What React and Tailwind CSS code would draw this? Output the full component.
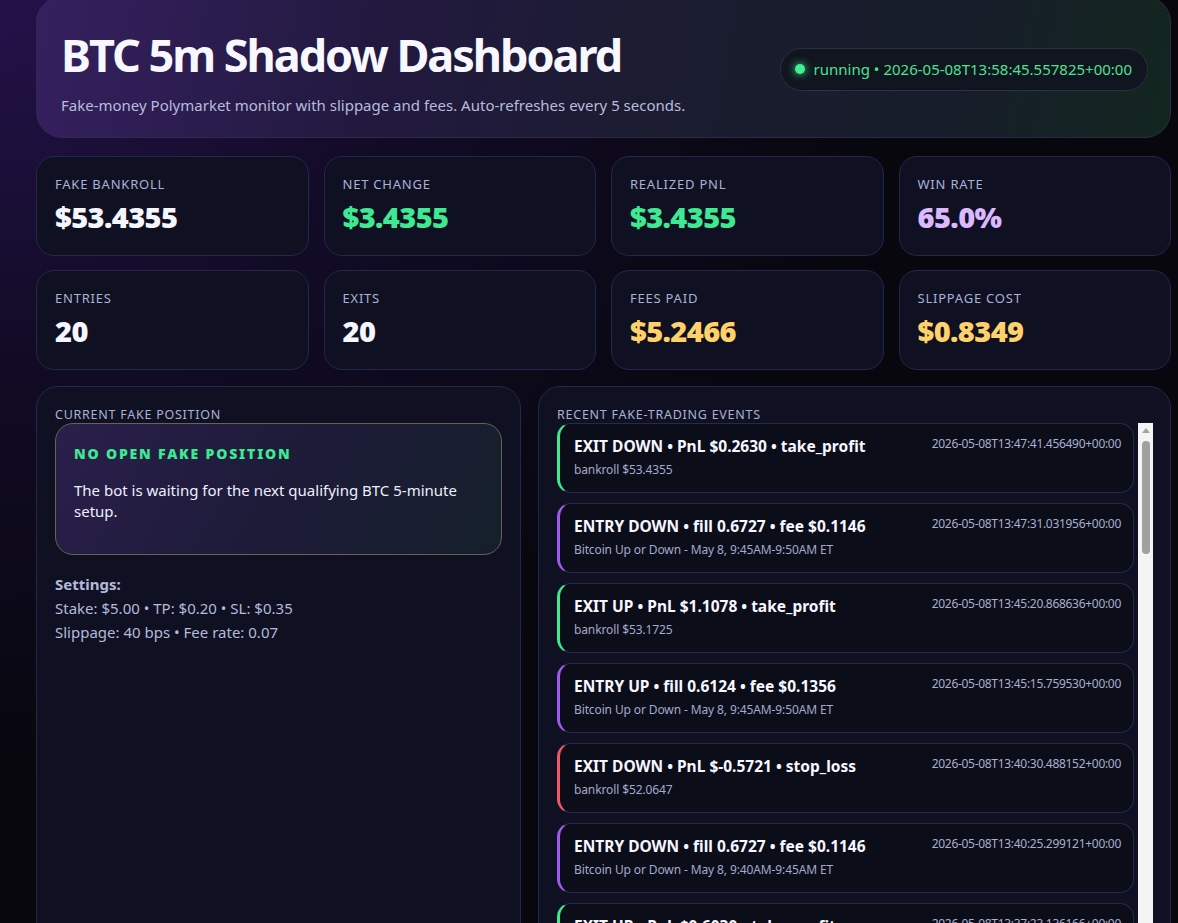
import React from "react";

const stats = [
  { label: "Fake bankroll", value: "$53.4355", color: "text-[#f5f6ff]" },
  { label: "Net change", value: "$3.4355", color: "text-[#3ee991]" },
  { label: "Realized PnL", value: "$3.4355", color: "text-[#3ee991]" },
  { label: "Win rate", value: "65.0%", color: "text-[#dcb8ff]" },
  { label: "Entries", value: "20", color: "text-[#f5f6ff]" },
  { label: "Exits", value: "20", color: "text-[#f5f6ff]" },
  { label: "Fees paid", value: "$5.2466", color: "text-[#ffd16b]" },
  { label: "Slippage cost", value: "$0.8349", color: "text-[#ffd16b]" },
];

const events = [
  {
    kind: "win",
    title: "EXIT DOWN • PnL $0.2630 • take_profit",
    sub: "bankroll $53.4355",
    ts: "2026-05-08T13:47:41.456490+00:00",
  },
  {
    kind: "entry",
    title: "ENTRY DOWN • fill 0.6727 • fee $0.1146",
    sub: "Bitcoin Up or Down - May 8, 9:45AM-9:50AM ET",
    ts: "2026-05-08T13:47:31.031956+00:00",
  },
  {
    kind: "win",
    title: "EXIT UP • PnL $1.1078 • take_profit",
    sub: "bankroll $53.1725",
    ts: "2026-05-08T13:45:20.868636+00:00",
  },
  {
    kind: "entry",
    title: "ENTRY UP • fill 0.6124 • fee $0.1356",
    sub: "Bitcoin Up or Down - May 8, 9:45AM-9:50AM ET",
    ts: "2026-05-08T13:45:15.759530+00:00",
  },
  {
    kind: "loss",
    title: "EXIT DOWN • PnL $-0.5721 • stop_loss",
    sub: "bankroll $52.0647",
    ts: "2026-05-08T13:40:30.488152+00:00",
  },
  {
    kind: "entry",
    title: "ENTRY DOWN • fill 0.6727 • fee $0.1146",
    sub: "Bitcoin Up or Down - May 8, 9:40AM-9:45AM ET",
    ts: "2026-05-08T13:40:25.299121+00:00",
  },
  {
    kind: "win",
    title: "EXIT UP • PnL $0.6030 • take_profit",
    sub: "bankroll $52.6368",
    ts: "2026-05-08T13:37:23.136166+00:00",
  },
  {
    kind: "entry",
    title: "ENTRY UP • fill 0.5931 • fee $0.1420",
    sub: "Bitcoin Up or Down - May 8, 9:35AM-9:40AM ET",
    ts: "2026-05-08T13:35:12.402871+00:00",
  },
];

const accent = {
  win: "border-l-[#3ee991]",
  loss: "border-l-[#f0576b]",
  entry: "border-l-[#9d5cf0]",
};

const StatCard = ({ label, value, color }) => (
  <div className="h-[100px] rounded-[18px] border border-[#24274a] bg-[#0f1122] px-[18px] pt-[18px]">
    <div className="text-[13px] uppercase tracking-[0.06em] text-[#a9b1d6] leading-[18px]">
      {label}
    </div>
    <div
      className={`mt-[6px] text-[29px] font-black leading-[36px] tracking-[-0.02em] ${color}`}
    >
      {value}
    </div>
  </div>
);

const EventCard = ({ e }) => (
  <div
    className={`h-[70px] shrink-0 rounded-[14px] border border-[#262a4a] border-l-[3px] bg-[#0b0d19] pl-[14px] pr-[12px] pt-[11px] ${accent[e.kind]}`}
  >
    <div className="flex items-start justify-between gap-3">
      <div className="text-[15.5px] font-bold leading-[22px] text-[#f6f7ff]">
        {e.title}
      </div>
      <div className="pt-[1px] text-[12px] leading-[16px] text-[#a9b0cf] tracking-[-0.025em]">
        {e.ts}
      </div>
    </div>
    <div className="mt-[5px] text-[12px] leading-[16px] text-[#a3aacb] tracking-[-0.01em]">
      {e.sub}
    </div>
  </div>
);

export default function App() {
  return (
    <div
      className="min-h-screen bg-[#07070d] bg-[radial-gradient(ellipse_at_0%_0%,#24124a_0%,#120b26_25%,#07070d_55%)] text-white"
      style={{ fontFamily: '"Segoe UI", "Noto Sans", "Open Sans", sans-serif' }}
    >
      <div className="ml-[36px] mr-[7px] -mt-[4px] flex flex-col">
        {/* header */}
        <div className="flex h-[142px] items-center justify-between rounded-[26px] border border-[#2a2c4c] bg-[linear-gradient(100deg,#35205f_0%,#22193f_30%,#1b1c30_55%,#171d2a_80%,#13261f_100%)] pl-[24px] pr-[22px] pt-[8px]">
          <div>
            <h1 className="text-[45px] font-bold leading-[56px] tracking-[-0.045em] text-[#f7f7ff]">
              BTC 5m Shadow Dashboard
            </h1>
            <p className="mt-[12px] text-[15px] leading-[20px] text-[#b8bcdc]">
              Fake-money Polymarket monitor with slippage and fees.
              Auto-refreshes every 5 seconds.
            </p>
          </div>
          <div className="-mt-[4px] flex h-[43px] items-center gap-[9px] rounded-full border border-[#2b3047] bg-[#101520] pl-[14px] pr-[15px] text-[15px] text-[#4ee28f]">
            <span className="h-[10px] w-[10px] rounded-full bg-[#3ff08f] shadow-[0_0_8px_#3ff08f]" />
            <span>running • 2026-05-08T13:58:45.557825+00:00</span>
          </div>
        </div>

        {/* stats */}
        <div className="mt-[18px] grid grid-cols-4 gap-x-[15px] gap-y-[14px]">
          {stats.map((s) => (
            <StatCard key={s.label} {...s} />
          ))}
        </div>

        {/* panels */}
        <div className="mt-[16px] grid grid-cols-[485px_1fr] gap-[17px]">
          <div className="h-[620px] rounded-[22px] border border-[#24274a] bg-[#0f1122] px-[18px] pt-[20px]">
            <div className="text-[12.5px] uppercase tracking-[0.06em] text-[#a9b1d6] leading-[16px]">
              Current fake position
            </div>
            <div className="h-[132px] rounded-[18px] border border-[#6b6150] bg-[linear-gradient(120deg,#2a1f4c_0%,#1d1b38_50%,#15202b_100%)] px-[18px] pt-[20px]">
              <div className="text-[14px] font-black uppercase tracking-[0.13em] text-[#3ee991] leading-[20px]">
                No open fake position
              </div>
              <p className="mt-[16px] text-[15px] leading-[21px] text-[#eef0ff]">
                The bot is waiting for the next qualifying BTC 5-minute setup.
              </p>
            </div>
            <div className="mt-[17px] text-[15px] leading-[24px] text-[#b3badb]">
              <div className="font-bold">Settings:</div>
              <div>Stake: $5.00 • TP: $0.20 • SL: $0.35</div>
              <div>Slippage: 40 bps • Fee rate: 0.07</div>
            </div>
          </div>

          <div className="h-[620px] rounded-[22px] border border-[#24274a] bg-[#0f1122] pl-[18px] pr-[17px] pt-[20px]">
            <div className="text-[12.5px] uppercase tracking-[0.06em] text-[#a9b1d6] leading-[16px]">
              Recent fake-trading events
            </div>
            <div className="flex h-[560px] gap-[4px]">
              <div className="flex flex-1 flex-col gap-[10px] overflow-hidden">
                {events.map((e, i) => (
                  <EventCard key={i} e={e} />
                ))}
              </div>
              <div className="flex w-[15px] flex-col items-center bg-[#f4f4f4] pt-[5px]">
                <div className="h-0 w-0 border-x-[4px] border-b-[5px] border-x-transparent border-b-[#a3a3a3]" />
                <div className="mt-[8px] h-[113px] w-[8px] rounded-full bg-[#a0a0a0]" />
              </div>
            </div>
          </div>
        </div>
      </div>
    </div>
  );
}
